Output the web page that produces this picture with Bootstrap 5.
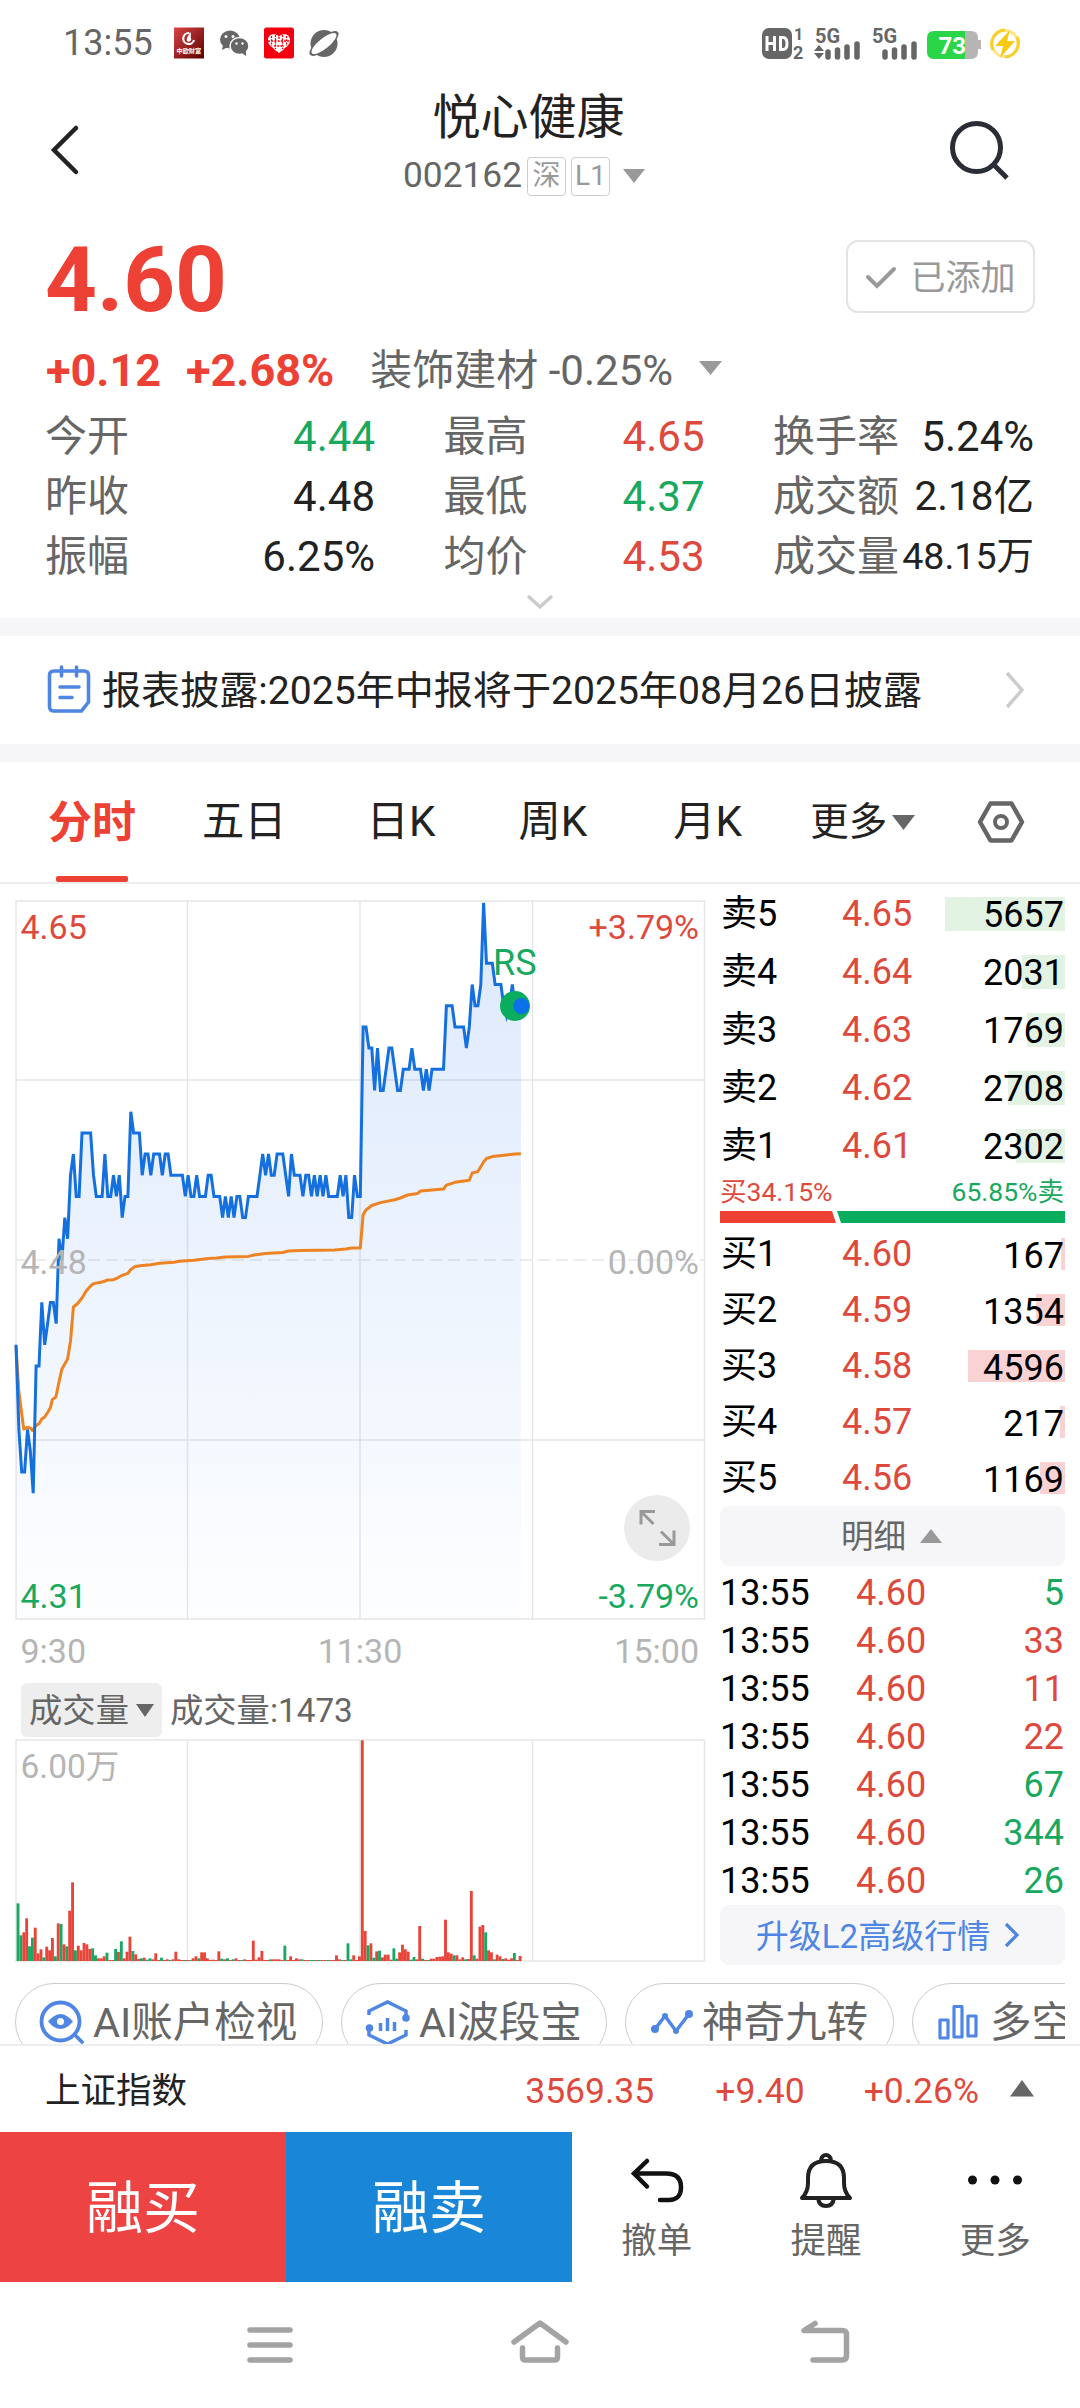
<!DOCTYPE html>
<html lang="zh-CN">
<head>
<meta charset="utf-8">
<meta name="viewport" content="width=device-width, initial-scale=1">
<title>悦心健康 002162</title>
<link href="https://cdn.jsdelivr.net/npm/bootstrap@5.3.0/dist/css/bootstrap.min.css" rel="stylesheet">
<style>
  :root { --up:#ee4135; --up2:#dd493c; --down:#18a85e; --ink:#222; --soft:#666; --pale:#999; --line:#e6e6e8; --strip:#f6f6f9; --blue:#4f86e3; }
  body { width:1080px; height:2408px; overflow:hidden; background:#fff; color:var(--ink); font-family:Roboto,"Noto Sans CJK SC",sans-serif; line-height:1; }
  svg { display:block; flex:none; }
  .c-up { color:var(--up2); } .c-down { color:var(--down); } .c-soft { color:var(--soft); } .c-blue { color:var(--blue); }
  .statusbar { height:86px; padding:0 45px 0 63px; font-size:36px; color:#666; }
  .status-icons { margin-left:19px; } .status-signal { margin-right:11px; }
  .topbar { height:128px; padding:0 70px 0 50px; }
  .title-block { padding:3px 0 0 29px; }
  .topbar h1 { font-size:48px; line-height:58px; font-weight:400; margin:0; }
  .code { height:58px; font-size:35.3px; color:var(--soft); margin-right:8px; }
  .tagbox { height:39px; border:1.5px solid #ccc; border-radius:4px; font-size:28px; color:var(--pale); width:39px; }
  .pricerow { height:132px; padding:0 45px; }
  .bigprice { font-size:90.5px; font-weight:700; color:var(--up); }
  .added { width:189px; height:73px; border:2px solid #e3e3e3; border-radius:12px; font-size:35px; color:var(--pale); margin-top:-7px; background:#fff; padding:3px 0 0; }
  .changerow { height:46px; padding:3px 0 0 46px; font-size:42px; color:var(--soft); margin-bottom:13px; }
  .changerow b { color:var(--up); font-size:45px; }
  .changerow b + b { margin:0 36px 0 25px; }
  .quotes { padding:0 46px 0 45px; gap:68.5px; font-size:42px; }
  .quotes > div { width:261px; } .quotes > div:first-child { width:330px; }
  .quotes .q { height:60px; white-space:nowrap; padding-top:3px; }
  .strip { height:18px; background:var(--strip); }
  .notice { height:108px; padding:0 54px 0 46px; font-size:39.1px; }
  .tabs { height:122px; border-bottom:2px solid #eee; padding:2px 55px 1px 46px; font-size:42.3px; }
  .tabs .on { color:var(--up); font-weight:700; font-size:44px; position:relative; }
  .tabs .on::after { content:""; position:absolute; left:8px; width:72px; height:6px; bottom:-37px; background:var(--up); border-radius:2px; }
  .leftcol { width:720px; } .rightcol { width:345px; padding-top:1px; }
  .volhead { height:54px; padding-left:21px; font-size:33.3px; color:var(--soft); }
  .volbtn { width:141px; height:54px; background:#eee; border-radius:6px; }
  .volhead span { padding-top:2px; }
  .book { font-size:36px; color:#000; padding-left:1px; }
  .book .lv { width:121px; } .book .qty { position:relative; height:34px; }
  .sell .book { height:58px; } .buy .book { height:56px; } .buy .qty { height:32px; }
  .qty .depth { position:absolute; right:0; top:0; bottom:0; background:#e2f2e3; }
  .buy .depth { background:#f9d3d3; }
  .qty span { position:relative; padding-right:1px; line-height:32px; }
  .share-row { height:36px; font-size:26.5px; padding:0 1px 1px 0; }
  .graybox { height:60px; background:var(--strip); border-radius:9px; padding-top:2px; }
  .tick { height:48px; font-size:36px; color:#000; padding:2px 1px 0 0; }
  .tick span:nth-child(1) { width:136px; }
  .pills { width:1065px; height:79px; padding:18px 0 0 15px; gap:18px; overflow:hidden; font-size:41.5px; color:var(--soft); }
  .pill { height:78px; border:1.5px solid #ccc; border-radius:39px; flex:none; white-space:nowrap; padding:1px 0 0 23px; }
  .indexbar { height:88px; border-top:2px solid #eee; padding:5px 46px 0 45px; font-size:35.5px; }
  .tradebtn { width:286px; height:150px; border:0; border-radius:0; font-size:57px; color:#fff; padding:3px 0 0; line-height:1; }
  .tool { width:169.3px; font-size:35.5px; color:var(--soft); padding-top:20px; }
  .tool svg { margin-bottom:14px; }
  .navbtns { height:126px; }
</style>
<script src="https://cdn.jsdelivr.net/npm/bootstrap@5.3.0/dist/js/bootstrap.bundle.min.js"></script>
</head>
<body>

<header class="statusbar d-flex align-items-center justify-content-between">
  <div class="d-flex align-items-center">
    <span>13:55</span>
    <svg class="status-icons" width="170" height="32" viewBox="172 27 170 32">
      <defs><linearGradient id="lg" x1="0" y1="0" x2="1" y2="1"><stop offset="0" stop-color="#dc4545"/><stop offset="1" stop-color="#5a0000"/></linearGradient></defs>
      <rect x="174" y="27.500" width="30" height="31" fill="url(#lg)"/>
      <path d="M189 33a5.500 5.500 0 1 0 5 7" fill="none" stroke="#fff" stroke-width="2.200"/><path d="M190 32c-1 4-4 5-3 9 3 2 5-1 4-3-1-2 1-4-1-6z" fill="#fff"/>
      <text x="176.500" y="53" font-size="6.200" font-weight="700" fill="#fff">中欧财富</text>
      <g fill="#666"><ellipse cx="230" cy="39.500" rx="10" ry="9"/><path d="M223 45l-1 5 6-3z"/><ellipse cx="239.500" cy="46" rx="9.500" ry="8.500" stroke="#fff" stroke-width="1.500"/><path d="M242 53l4 3v-5z"/></g>
      <g fill="#fff"><circle cx="226" cy="36.500" r="1.500"/><circle cx="233" cy="36.500" r="1.500"/><circle cx="236.500" cy="43.500" r="1.200"/><circle cx="242.500" cy="43.500" r="1.200"/></g>
      <rect x="264" y="27.500" width="30" height="31" rx="2.500" fill="#f20010"/>
      <path d="M279 37c-2-4-11-4-11 3 0 6 5 7 7 10l4 3 4-3c2-3 7-4 7-10 0-7-9-7-11-3z" fill="#fff"/>
      <path d="M271.500 36v10M275.500 35v14M279 37v5M282.500 35v14M286.500 36v10M268 41h22M274 46h10" stroke="#f20010" stroke-width="1.300" stroke-dasharray="2 1.200"/>
      <circle cx="324" cy="43.500" r="13.500" fill="#666"/>
      <ellipse cx="324" cy="43.500" rx="18" ry="6.500" transform="rotate(-39 324 43.500)" fill="#666"/>
      <ellipse cx="324" cy="43.500" rx="15.500" ry="5.200" transform="rotate(-39 324 43.500)" fill="#fff"/>
    </svg>
  </div>
  <svg class="status-signal" width="264" height="36" viewBox="760 25 264 36">
    <rect x="762" y="28" width="30" height="31" rx="7" fill="#666"/>
    <path d="M767 36v15M774.500 36v15M767 43.500h7.500M780.500 37.500v12h2.500q4 0 4-6t-4-6z" fill="none" stroke="#fff" stroke-width="3"/>
    <g fill="#666" font-weight="700"><text x="794" y="40" font-size="16">1</text><text x="793" y="58.500" font-size="18">2</text>
    <text x="815" y="43" font-size="20">5G</text><text x="872" y="43" font-size="20">5G</text></g>
    <path d="M814 51l5-6 5 6zM814 53l5 6 5-6z" fill="#666"/>
    <path d="M828 52v5M837.500 50v7M847 47v10M857 44v13M885 52v5M894.500 50v7M904 47v10M914 44v13" stroke="#666" stroke-width="5.500" stroke-linecap="round"/>
    <path d="M934 31h37q7 0 7 7v2h3v9h-3v3q0 7-7 7h-6V31z" fill="#b5b5b5"/>
    <path d="M934 31h31v28h-31q-7 0-7-7V38q0-7 7-7z" fill="#2bd548"/>
    <text x="938.500" y="53.500" font-size="24" font-weight="700" fill="#fff">73</text>
    <circle cx="1005" cy="43.500" r="13" fill="none" stroke="#fbe48a" stroke-width="3"/>
    <path d="M993 50a14 14 0 0 1 12-20M1017 37a14 14 0 0 1-12 20" fill="none" stroke="#f8d02c" stroke-width="3"/>
    <path d="M1010 30l-15 16h8l-3 12 15-17h-8z" fill="#fbc910"/>
  </svg>
</header>

<div class="topbar d-flex justify-content-between align-items-start">
  <svg width="30" height="54" viewBox="50 123 30 54" style="margin-top:37px"><path d="M76 128L54 150l22 22" fill="none" stroke="#222" stroke-width="4.500" stroke-linecap="round"/></svg>
  <div class="title-block d-flex flex-column align-items-center">
    <h1>悦心健康</h1>
    <div class="code d-flex align-items-center">002162
      <span class="tagbox d-flex align-items-center justify-content-center" style="margin-left:5px">深</span>
      <span class="tagbox d-flex align-items-center justify-content-center" style="margin:0 12px 0 5px">L1</span>
      <svg width="24" height="16"><path d="M1 1h22L12 15z" fill="#999"/></svg>
    </div>
  </div>
  <svg width="62" height="62" viewBox="950 119 62 62" style="margin-top:33px"><circle cx="978.500" cy="147.500" r="24" fill="none" stroke="#2a2c36" stroke-width="5"/><path d="M996 165l13 13" stroke="#2a2c36" stroke-width="5"/></svg>
</div>

<section>
  <div class="pricerow d-flex align-items-center justify-content-between">
    <div class="bigprice">4.60</div>
    <button class="added d-flex align-items-center justify-content-center"><svg width="32" height="26" style="margin-right:13px"><path d="M3 12l9 9L29 4" fill="none" stroke="#999" stroke-width="4" stroke-linecap="round"/></svg>已添加</button>
  </div>
  <div class="changerow d-flex align-items-center">
    <b>+0.12</b><b>+2.68%</b><span>装饰建材 -0.25%</span>
    <svg width="26" height="16" style="margin-left:25px;margin-top:-5px"><path d="M1 1h23L12.500 15z" fill="#999"/></svg>
  </div>
  <div class="quotes d-flex">
    <div>
      <div class="q d-flex justify-content-between align-items-center"><span class="c-soft">今开</span><span class="c-down">4.44</span></div>
      <div class="q d-flex justify-content-between align-items-center"><span class="c-soft">昨收</span><span>4.48</span></div>
      <div class="q d-flex justify-content-between align-items-center"><span class="c-soft">振幅</span><span>6.25%</span></div>
    </div>
    <div>
      <div class="q d-flex justify-content-between align-items-center"><span class="c-soft">最高</span><span class="c-up">4.65</span></div>
      <div class="q d-flex justify-content-between align-items-center"><span class="c-soft">最低</span><span class="c-down">4.37</span></div>
      <div class="q d-flex justify-content-between align-items-center"><span class="c-soft">均价</span><span class="c-up">4.53</span></div>
    </div>
    <div>
      <div class="q d-flex justify-content-between align-items-center"><span class="c-soft">换手率</span><span>5.24%</span></div>
      <div class="q d-flex justify-content-between align-items-center"><span class="c-soft">成交额</span><span style="font-size:40.500px">2.18亿</span></div>
      <div class="q d-flex justify-content-between align-items-center"><span class="c-soft">成交量</span><span style="font-size:37.500px">48.15万</span></div>
    </div>
  </div>
  <div class="d-flex justify-content-center align-items-center" style="height:33px"><svg width="30" height="18"><path d="M3 3l12 11L27 3" fill="none" stroke="#ccc" stroke-width="3.500"/></svg></div>
</section>
<div class="strip"></div>
<section class="notice d-flex align-items-center">
  <svg width="46" height="50" viewBox="46 665 46 50"><g fill="none" stroke="#4f86e3" stroke-width="3.600" stroke-linecap="round"><path d="M54 671h30q4.500 0 4.500 4.500V702l-7 9H54q-4.500 0-4.500-4.500V675.500q0-4.500 4.500-4.500zM61.500 667v9M76.500 667v9M60 687h19M60 697.500h12"/></g></svg>
  <span style="margin-left:10px;padding-top:3px" class="flex-grow-1">报表披露:2025年中报将于2025年08月26日披露</span>
  <svg width="22" height="40"><path d="M3 3l15 17L3 37" fill="none" stroke="#ccc" stroke-width="3.500"/></svg>
</section>
<div class="strip"></div>
<nav class="tabs d-flex align-items-center">
  <span class="on" style="margin-left:2px">分时</span>
  <span style="margin-left:66px">五日</span><span style="margin-left:80px">日K</span><span style="margin-left:83px">周K</span><span style="margin-left:86px">月K</span>
  <span style="margin-left:68px;font-size:38.500px">更多</span>
  <svg width="24" height="16" style="margin-left:5px"><path d="M0 0h23L11.500 15z" fill="#666"/></svg>
  <svg class="ms-auto" width="48" height="44" style="margin-top:-2px"><path d="M13.500 3.500h21L45 22 34.500 40.500h-21L3 22z" fill="none" stroke="#666" stroke-width="4.500" stroke-linejoin="round"/><circle cx="24" cy="22" r="6" fill="none" stroke="#666" stroke-width="4"/></svg>
</nav>

<main class="d-flex">
  <div class="leftcol">
    <svg id="priceChart" width="720" height="799" viewBox="0 884 720 799">
      <defs><linearGradient id="area" x1="0" y1="900" x2="0" y2="1619" gradientUnits="userSpaceOnUse"><stop offset="0" stop-color="#3b82f0" stop-opacity=".18"/><stop offset="1" stop-color="#3b82f0" stop-opacity=".01"/></linearGradient></defs>
      <g fill="none" stroke="#e6e6e8" stroke-width="1.500"><path d="M16 901H704.500V1619H16zM187.500 901V1619M360 901V1619M532.500 901V1619M16 1080H704M16 1440H704"/><path d="M16 1260H704" stroke-dasharray="12 6"/></g>
      <path id="fillArea" fill="url(#area)"/>
      <polyline id="avgLine" fill="none" stroke="#ed8322" stroke-width="3" stroke-linejoin="round"/>
      <polyline id="priceLine" fill="none" stroke="#1470df" stroke-width="3"/>
      <circle cx="515" cy="1006" r="15" fill="#0aad5e"/><circle cx="521.300" cy="1006" r="8" fill="#0c70ea"/>
      <text x="493" y="975" font-size="36" fill="#18a85e">RS</text>
      <g font-size="34" fill="#b5b5b5">
        <text x="20.500" y="938.500" fill="#dd493c">4.65</text><text x="699" y="938.500" fill="#dd493c" text-anchor="end">+3.79%</text>
        <text x="20.500" y="1273.500">4.48</text><text x="699" y="1273.500" text-anchor="end">0.00%</text>
        <text x="20.500" y="1608" fill="#18a85e">4.31</text><text x="699" y="1608" fill="#18a85e" text-anchor="end">-3.79%</text>
        <text x="20.500" y="1663">9:30</text><text x="360" y="1663" text-anchor="middle">11:30</text><text x="699" y="1663" text-anchor="end">15:00</text>
      </g>
      <circle cx="657" cy="1528" r="33" fill="#ebebeb"/>
      <path d="M655 1511.500h-14v13M641.500 1512l12 12M659 1544.500h15v-14M673 1543.500l-12-12" fill="none" stroke="#999" stroke-width="3"/>
    </svg>
    <div class="volhead d-flex align-items-center">
      <span class="volbtn d-flex align-items-center justify-content-center">成交量<svg width="18" height="14" style="margin-left:7px"><path d="M0 0h18L9 13z" fill="#666"/></svg></span>
      <span style="margin-left:8px">成交量:1473</span>
    </div>
    <svg id="volChart" width="720" height="228" viewBox="0 1737 720 228">
      <path d="M16 1740H704.500V1961H16zM187.500 1740V1961M360 1740V1961M532.500 1740V1961" fill="none" stroke="#e6e6e8" stroke-width="1.500"/>
      <text x="20.500" y="1778" font-size="33.500" fill="#b5b5b5">6.00万</text>
    </svg>
  </div>

  <div class="rightcol">
    <div class="sell" id="sell"></div>
    <div class="share-row d-flex justify-content-between align-items-center"><span class="c-up">买34.15%</span><span class="c-down">65.85%卖</span></div>
    <svg width="345" height="15"><path d="M0 0h112l4 12H0z" fill="#ee4135"/><path d="M117 0h228v12H121z" fill="#0aad5e"/></svg>
    <div class="buy" id="buy"></div>
    <div class="graybox d-flex align-items-center justify-content-center c-soft" style="font-size:32.500px;margin-bottom:2px;padding-right:2px">明细<svg width="22" height="15" style="margin-left:14px;margin-top:-2px"><path d="M11 0l11 14H0z" fill="#999"/></svg></div>
    <div id="ticks"></div>
    <div class="graybox d-flex align-items-center justify-content-center c-blue" style="font-size:33px;margin-top:1px;padding-right:9px">升级L2高级行情<svg width="16" height="26" style="margin-left:14px;margin-top:-2px"><path d="M2 2l11 11L2 24" fill="none" stroke="#4f86e3" stroke-width="3.200"/></svg></div>
  </div>
</main>

<div class="pills d-flex">
  <div class="pill d-flex align-items-center" style="width:308px"><svg width="46" height="46" style="margin-right:8px"><g fill="none" stroke="#4f86e3" stroke-width="3.800" stroke-linecap="round"><circle cx="21.500" cy="21.500" r="19"/><path d="M37 36l6 6"/></g><path d="M9 21.500q12.500-15 25 0-12.500 15-25 0z" fill="#4f86e3"/><circle cx="21.500" cy="21.500" r="3.500" fill="#fff"/></svg>AI账户检视</div>
  <div class="pill d-flex align-items-center" style="width:266px"><svg width="46" height="46" style="margin-right:8px"><g fill="none" stroke="#4f86e3" stroke-width="3.500"><path d="M4 15v-4L22.500 2 41 11v6M41 30v5L22.500 44 4 35v-6M15.500 31v-8M22.500 31V18M29.500 31v-9"/></g><circle cx="41" cy="18" r="3.800" fill="#4f86e3"/><circle cx="4.500" cy="28" r="3.800" fill="#4f86e3"/></svg>AI波段宝</div>
  <div class="pill d-flex align-items-center" style="width:269px"><svg width="46" height="28" style="margin-right:6px;margin-left:1px"><path d="M5 20L15 7l11 15L39 5" fill="none" stroke="#4f86e3" stroke-width="3.500" stroke-linejoin="round"/><g fill="#4f86e3"><circle cx="5" cy="20" r="4"/><circle cx="15" cy="7" r="3"/><circle cx="26" cy="22" r="3"/><circle cx="39" cy="5" r="4"/></g></svg>神奇九转</div>
  <div class="pill d-flex align-items-center" style="width:269px"><svg width="46" height="38" style="margin-right:8px"><path d="M4 16h8v18H4zM18 2.500h8V33h-8zM32 12h8v20h-8z" fill="none" stroke="#4f86e3" stroke-width="3.200" stroke-linejoin="round"/></svg>多空资金</div>
</div>
<div class="indexbar d-flex align-items-center">
  <span class="flex-grow-1">上证指数</span><span class="c-up">3569.35</span><span class="c-up" style="margin-left:61px">+9.40</span><span class="c-up" style="margin-left:59px">+0.26%</span>
  <svg width="24" height="17" style="margin-left:31px;margin-top:-7px"><path d="M12 0l12 16.500H0z" fill="#666"/></svg>
</div>
<div class="d-flex">
  <button class="tradebtn" style="background:#ee4343">融买</button>
  <button class="tradebtn" style="background:#1986d7">融卖</button>
  <div class="tool d-flex flex-column align-items-center"><svg width="54" height="58" viewBox="629 2152 54 58"><path d="M646 2161l-13 12.500 13 13M634 2173.500h31q15 0 15 13.500t-13 13h-8" fill="none" stroke="#111" stroke-width="4.500" stroke-linecap="round"/></svg>撤单</div>
  <div class="tool d-flex flex-column align-items-center"><svg width="54" height="58" viewBox="798 2152 54 58"><g fill="none" stroke="#222" stroke-width="4" stroke-linejoin="round"><path d="M801 2198q6-6 6-15v-5q0-17 18-17t18 17v5q0 9 6 15zM820 2160q1-5 5-5t5 5M817 2198q1 8 8 8t8-8"/></g></svg>提醒</div>
  <div class="tool d-flex flex-column align-items-center"><svg width="54" height="58"><g fill="#111"><circle cx="4.500" cy="28" r="4.500"/><circle cx="27" cy="28" r="4.500"/><circle cx="49.500" cy="28" r="4.500"/></g></svg>更多</div>
</div>
<div class="navbtns">
  <svg width="1080" height="126" viewBox="0 2282 1080 126"><g fill="none" stroke="#a3a3a3" stroke-width="5.500" stroke-linecap="round" stroke-linejoin="round"><path d="M250 2330h40M250 2345h40M250 2360h40M514 2342l26-19 26 19M522.500 2348v9q0 3 3 3h29q3 0 3-3v-9M815 2323.500l-11 7H842q4.500 0 4.500 4v21q0 4.500-4.500 4.500h-29"/></g></svg>
</div>

<script>
  // Minute prices as ticks of 0.01 above the previous close (4.48)
  const ticks = [-4,-8,-10,-10,-8,-9,-11,-5,-5,-2,-4,-3,-2,-2,-3,1,0,2,1,4,5,3,3,6,6,6,6,4,3,3,3,5,3,3,4,3,4,2,3,3,7,6,6,6,4,5,5,4,5,5,5,4,5,5,4,4,4,4,4,3,4,3,3,4,3,3,3,4,4,3,3,3,2,3,2,3,2,3,3,2,2,3,3,3,3,4,5,4,5,4,4,5,5,5,4,3,5,4,4,4,3,4,4,3,4,3,4,3,4,3,3,3,3,4,3,4,2,2,4,3,3,
    11,11,10,10,8,10,8,8,9,10,10,9,8,8,9,9,9,10,9,9,9,8,9,8,9,9,9,9,9,12,12,12,11,11,11,11,10,11,13,12,12,13,16.85,14,14,14,13,13,13,12,11.5,12,13,12,12,12];
  const X = i => +(16 + i * 2.869).toFixed(1);
  const line = ticks.map((t, i) => X(i) + ',' + (1260 - t * 21.19).toFixed(1));
  document.getElementById('priceLine').setAttribute('points', line.join(' '));
  document.getElementById('fillArea').setAttribute('d', 'M16,1619L' + line.join('L') + 'V1619Z');
  const avg = [[0,1346],[1,1392],[2,1413.5],[2.7,1429],[4,1427.5],[5,1428],[5.7,1430.4],[7,1425.6],[8,1423.7],[9,1419],[10,1417],[11,1412.5],[12,1407.7],[12.7,1399.4],[13.9,1397],[15,1382],[16,1369],[17,1364],[18,1359],[19,1341],[20,1307],[21.5,1303.5],[23,1298],[24.6,1290.4],[26,1286],[27,1283.6],[30,1282],[32,1280],[34,1279.7],[35.5,1277.8],[37,1275.3],[39,1273.4],[40,1269.5],[41.5,1266.6],[44,1265.6],[47,1264.7],[50,1263.2],[55,1262.2],[57,1261.3],[62,1260.3],[67,1258.4],[70,1258],[73,1257],[81,1256.4],[83,1255],[87,1253.5],[93,1252.5],[95,1251],[99,1250.6],[111,1250],[115,1249],[117,1248],[120,1248],[121,1214.8],[122,1210],[124,1205.5],[127,1202.6],[132,1199.7],[134,1198],[136.5,1195],[140,1193.4],[141,1191],[149,1189],[150,1185.2],[153,1182.3],[158,1180.3],[159,1173],[161,1171.6],[163,1162],[164,1158.5],[166,1156.6],[171,1155],[174,1154],[176,1153.7]];
  document.getElementById('avgLine').setAttribute('points', avg.map(p => X(p[0]) + ',' + p[1]).join(' '));

  // Minute volumes, negative values are falling minutes (thirds of a pixel)
  const vol = [-173,-77,86,128,-44,-70,100,23,35,-11,43,32,69,-14,113,-111,50,-44,151,236,-32,46,32,54,50,36,-38,-17,8,8,14,-25,3,3,-36,27,-59,8,28,73,-30,20,6,-8,10,-4,-8,5,23,3,-10,3,5,-3,5,28,5,3,-3,3,-3,8,14,-8,26,26,8,2,4,3,29,-7,5,-8,3,-5,8,3,-3,5,3,3,61,4,11,30,2,2,-5,5,5,5,3,-46,3,14,3,8,5,-5,3,2,-2,-2,2,-2,2,2,-2,2,3,17,5,-3,2,-53,-5,17,3,14,662,90,-47,53,-10,29,-31,11,19,19,4,-38,-7,26,49,35,28,-4,-12,5,105,-7,3,-3,7,7,12,13,14,124,26,22,-17,17,5,11,-5,6,210,-17,7,103,108,-86,32,26,-5,19,14,-6,8,4,8,-24,2,15];
  const NS = 'http://www.w3.org/2000/svg', vc = document.getElementById('volChart');
  vol.forEach((v, i) => {
    const h = Math.max(Math.abs(v) / 3, 1), r = document.createElementNS(NS, 'rect');
    r.setAttribute('x', (18 + i * 2.869 - 1.4).toFixed(2)); r.setAttribute('y', 1961 - h);
    r.setAttribute('width', 2.87); r.setAttribute('height', h);
    r.setAttribute('fill', v > 0 ? '#e8453a' : '#18a862'); vc.appendChild(r);
  });

  const book = (id, rows) => document.getElementById(id).innerHTML = rows.map(r =>
    `<div class="book d-flex align-items-center"><span class="lv">${r[0]}</span><span class="c-up">${r[1]}</span><div class="qty flex-grow-1 text-end"><div class="depth" style="width:${r[3]}px"></div><span>${r[2]}</span></div></div>`).join('');
  book('sell', [['卖5','4.65',5657,120],['卖4','4.64',2031,43],['卖3','4.63',1769,38],['卖2','4.62',2708,57],['卖1','4.61',2302,49]]);
  book('buy', [['买1','4.60',167,4],['买2','4.59',1354,29],['买3','4.58',4596,97],['买4','4.57',217,5],['买5','4.56',1169,25]]);
  document.getElementById('ticks').innerHTML = [-5,33,11,22,-67,-344,-26].map(q =>
    `<div class="tick d-flex align-items-center"><span>13:55</span><span class="c-up">4.60</span><span class="ms-auto ${q > 0 ? 'c-up' : 'c-down'}">${Math.abs(q)}</span></div>`).join('');
</script>
</body>
</html>
